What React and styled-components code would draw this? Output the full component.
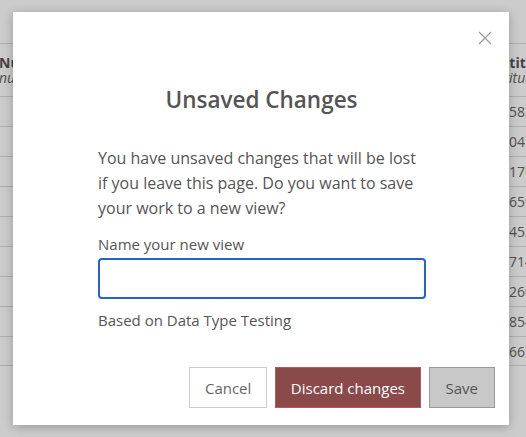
import React from "react";
import styled, { createGlobalStyle } from "styled-components";

const GlobalStyle = createGlobalStyle`
  html, body {
    margin: 0;
    padding: 0;
    overflow: hidden;
    background: #fff;
  }
  body {
    font-family: "Open Sans", "Liberation Sans", sans-serif;
  }
`;

const rows = ["5834", "0417", "1762", "6591", "4528", "7149", "2603", "8544", "6672"];

const Page = styled.div`
  position: relative;
  width: 526px;
  height: 437px;
  overflow: hidden;
`;

const Table = styled.div`
  padding-top: 43px;
  color: #666;
  font-size: 14px;
`;

const Row = styled.div`
  display: grid;
  grid-template-columns: 493px 120px;
  height: ${(p) => (p.header ? 53 : 30)}px;
  border-top: 1px solid #ddd;
  box-sizing: border-box;
  align-items: center;
  &:last-child {
    border-bottom: 1px solid #ddd;
  }
`;

const Cell = styled.div`
  padding-left: ${(p) => p.pad || 0}px;
  white-space: nowrap;
  line-height: 15px;
  margin-left: ${(p) => p.shift || 0}px;
`;

const HeadTitle = styled.div`
  font-weight: 700;
  color: #555;
`;

const HeadSub = styled.div`
  font-style: italic;
`;

const Overlay = styled.div`
  position: absolute;
  inset: 0;
  background: rgba(0, 0, 0, 0.2);
`;

const Modal = styled.div`
  position: absolute;
  left: 13px;
  top: 12px;
  width: 496px;
  height: 413px;
  background: #fff;
  box-shadow: 0 2px 10px rgba(0, 0, 0, 0.25);
  box-sizing: border-box;
  display: flex;
  flex-direction: column;
  padding: 19px 14px 17px 15px;
`;

const CloseRow = styled.div`
  display: flex;
  justify-content: flex-end;
  padding-right: 3px;
`;

const CloseButton = styled.button`
  border: 0;
  background: none;
  padding: 0;
  width: 14px;
  height: 14px;
  cursor: pointer;
  display: flex;
`;

const Title = styled.h2`
  margin: 39px 0 0;
  text-align: center;
  font-size: 22.5px;
  font-weight: 600;
  color: #555;
  line-height: 32px;
`;

const Body = styled.div`
  width: 328px;
  margin: 30px 0 0 70px;
  color: #555;
`;

const Message = styled.p`
  margin: 0;
  font-size: 16px;
  line-height: 25px;
`;

const Label = styled.label`
  display: block;
  margin-top: 12px;
  font-size: 15px;
  line-height: 22px;
`;

const Input = styled.input`
  display: block;
  width: 100%;
  height: 41px;
  margin-top: 3px;
  box-sizing: border-box;
  border: 2px solid #2463c7;
  border-radius: 4px;
  outline: none;
  font: inherit;
  padding: 0 10px;
`;

const Hint = styled.div`
  margin-top: 10px;
  font-size: 15px;
  line-height: 22px;
`;

const Footer = styled.div`
  margin-top: auto;
  display: flex;
  justify-content: flex-end;
  gap: 8px;
`;

const variants = {
  plain: { bg: "#fff", border: "#ccc", color: "#666", pad: 15 },
  danger: { bg: "#8a4a4a", border: "#b45c5c", color: "#fff", pad: 14.5 },
  muted: { bg: "#c8c8c8", border: "#999", color: "#555", pad: 16 },
};

const Button = styled.button`
  height: 41px;
  padding: 0 ${(p) => variants[p.variant].pad}px;
  font-family: "Open Sans", "Liberation Sans", sans-serif;
  font-size: 15px;
  border: 1px solid ${(p) => variants[p.variant].border};
  background: ${(p) => variants[p.variant].bg};
  color: ${(p) => variants[p.variant].color};
  border-radius: 0;
  cursor: pointer;
`;

export default function App() {
  return (
    <Page>
      <GlobalStyle />
      <Table>
        <Row header>
          <Cell shift={-1}>
            <HeadTitle>Number</HeadTitle>
            <HeadSub>number</HeadSub>
          </Cell>
          <Cell pad={0}>
            <HeadTitle>Latitude</HeadTitle>
            <HeadSub>latitude</HeadSub>
          </Cell>
        </Row>
        {rows.map((v) => (
          <Row key={v}>
            <Cell />
            <Cell pad={16}>{v}</Cell>
          </Row>
        ))}
      </Table>
      <Overlay />
      <Modal>
        <CloseRow>
          <CloseButton aria-label="Close">
            <svg width="14" height="14" viewBox="0 0 14 14">
              <path d="M1 1 L13 13 M13 1 L1 13" stroke="#999" strokeWidth="1.1" fill="none" />
            </svg>
          </CloseButton>
        </CloseRow>
        <Title>Unsaved Changes</Title>
        <Body>
          <Message>
            You have unsaved changes that will be lost if you leave this page. Do you want to save
            your work to a new view?
          </Message>
          <Label>Name your new view</Label>
          <Input />
          <Hint>Based on Data Type Testing</Hint>
        </Body>
        <Footer>
          <Button variant="plain">Cancel</Button>
          <Button variant="danger">Discard changes</Button>
          <Button variant="muted">Save</Button>
        </Footer>
      </Modal>
    </Page>
  );
}
